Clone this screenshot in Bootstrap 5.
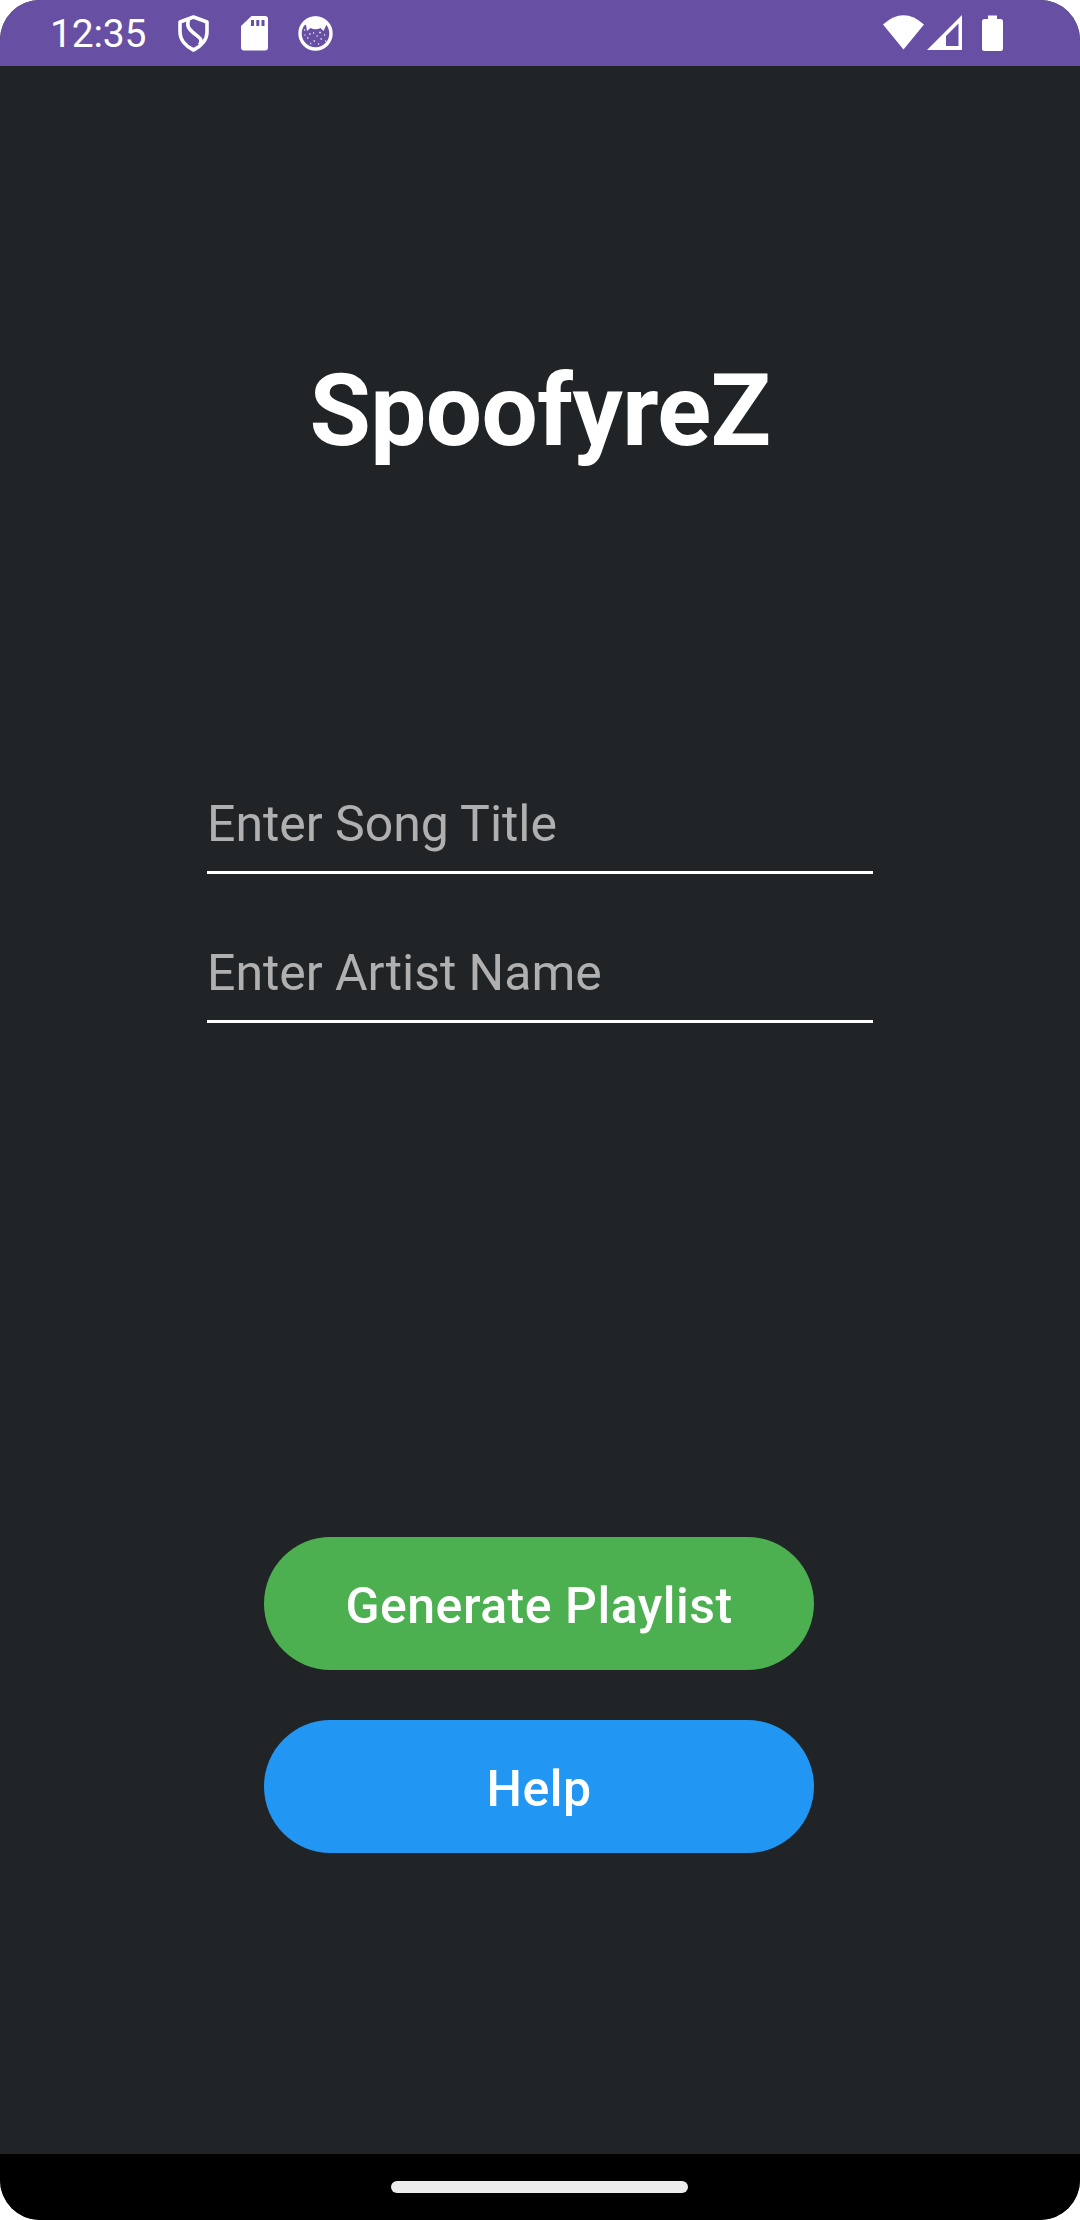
<!DOCTYPE html>
<html lang="en">
<head>
<meta charset="utf-8">
<meta name="viewport" content="width=device-width, initial-scale=1">
<title>SpoofyreZ</title>
<link href="https://cdn.jsdelivr.net/npm/bootstrap@5.3.0/dist/css/bootstrap.min.css" rel="stylesheet">
<style>
  body { font-family: Roboto, sans-serif; background: #fff; }
  .phone { width: 1080px; height: 2220px; border-radius: 40px; background: #212427; }
  .status-bar { height: 66px; background: #6750a3; padding: 0 76px 0 50px; }
  .clock { font-size: 39px; letter-spacing: -.2px; line-height: 66px; width: 128px; padding-top: 2px; }
  .app-title { font-size: 99.75px; font-weight: 700; letter-spacing: -.55px; line-height: 118px; margin-top: 286px; color: #fff; }
  .song-form { width: 666px; margin-top: 307px; gap: 52px; }
  .line-input, .line-input:focus {
    height: 97px; padding: 0 0 1px; font-size: 50px; letter-spacing: -.04px; line-height: 60px; color: #fff;
    background: transparent; border: 0; border-bottom: 3px solid #fff; border-radius: 0; box-shadow: none;
  }
  .line-input::placeholder { color: #b0b0b0; opacity: 1; }
  .actions { width: 550px; margin-top: 514px; margin-right: 2px; gap: 50px; }
  .action-btn { height: 133px; font-size: 50px; font-weight: 500; letter-spacing: .5px; color: #fff; border: 0; padding: 6px 0 0; }
  .btn-generate { background: #4caf50; }
  .btn-help { background: #2196f3; }
  .nav-area { height: 66px; background: #000; }
  .home-pill { width: 297px; height: 12px; background: #ececec; margin-right: 1px; }
</style>
</head>
<body>
<div class="phone d-flex flex-column overflow-hidden">
  <header class="status-bar d-flex align-items-center text-white flex-shrink-0">
    <span class="clock">12:35</span>
    <svg width="162" height="66" viewBox="178 0 162 66" fill="none" stroke="#fff" aria-hidden="true">
      <path d="M193.500 17 L207 22 V32 C207 40 201 46.500 193.500 50 C186 46.500 180 40 180 32 V22 Z" stroke-width="3.600" stroke-linejoin="round"/>
      <path d="M188.500 19 C186.500 27 189 29 193 32.500 C199 37.500 203.500 39 199.500 45" stroke-width="3.600"/>
      <path d="M251.500 16 H265 Q268 16 268 19 V47.500 Q268 50.500 265 50.500 H244 Q241 50.500 241 47.500 V26 Z" fill="#fff" stroke="none"/>
      <path d="M251 20 h3 v6 h-3z M256.300 20 h3 v6 h-3z M261.500 20 h3 v6 h-3z" fill="#6750a3" stroke="none"/>
      <circle cx="315.500" cy="33.500" r="15.500" stroke-width="3.400"/>
      <path d="M301 27 Q306 16.500 315.500 16.500 Q325 16.500 330 27 L326.500 24.500 L323.500 31 L320.500 28 Q315.500 30.500 310.500 28 L307 31 L306 24.500 Z" fill="#fff" stroke="none"/>
      <path d="M304 30h1.200 M309 34h1.500 M307 38h1.500 M313 33h1.200 M316.500 36h1.200 M319 32.500h2 M313.500 41h1.500 M310 43.500h1.200 M320.500 39h1.500 M324 35h1.200 M318 44h1.200 M325 41h1.200 M304.500 35h1" stroke-width="1.300" opacity=".8"/>
    </svg>
    <svg class="ms-auto" width="122" height="66" viewBox="882 0 122 66" fill="#fff" aria-hidden="true">
      <path d="M903.500 49.500 L883 24.500 Q903.500 6 924 24.500 Z"/>
      <path fill-rule="evenodd" d="M927 50 L962 15 V50 Z M946 36 V46 H958.500 V23.500 Z"/>
      <path d="M988 15.500 H997 V19 H1000.500 Q1003 19 1003 21.500 V48.500 Q1003 51 1000.500 51 H984.500 Q982 51 982 48.500 V21.500 Q982 19 984.500 19 H988 Z"/>
    </svg>
  </header>
  <main class="flex-grow-1 d-flex flex-column align-items-center">
    <h1 class="app-title mb-0">SpoofyreZ</h1>
    <form class="song-form d-flex flex-column">
      <input class="form-control line-input" type="text" placeholder="Enter Song Title" aria-label="Song title">
      <input class="form-control line-input" type="text" placeholder="Enter Artist Name" aria-label="Artist name">
    </form>
    <div class="actions d-flex flex-column">
      <button class="btn rounded-pill action-btn btn-generate" type="button">Generate Playlist</button>
      <button class="btn rounded-pill action-btn btn-help" type="button">Help</button>
    </div>
  </main>
  <footer class="nav-area d-flex align-items-center justify-content-center flex-shrink-0">
    <div class="home-pill rounded-pill"></div>
  </footer>
</div>
<script src="https://cdn.jsdelivr.net/npm/bootstrap@5.3.0/dist/js/bootstrap.bundle.min.js"></script>
</body>
</html>
